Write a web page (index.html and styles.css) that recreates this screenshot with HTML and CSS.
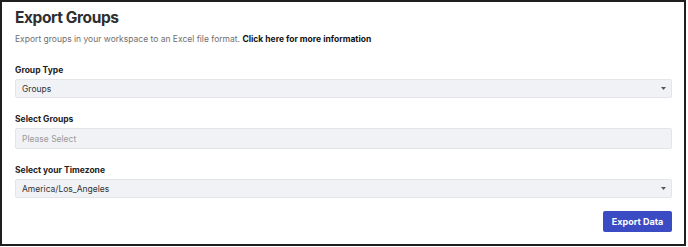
FILE: index.html
```html
<!DOCTYPE html>
<html lang="en">
<head>
<meta charset="utf-8">
<title>Export Groups</title>
<link rel="stylesheet" href="styles.css">
</head>
<body>
<div class="frame">
  <h1 class="title">Export Groups</h1>
  <p class="desc">Export groups in your workspace to an Excel file format. <a class="link" href="#">Click here for more information</a></p>

  <div class="group">
    <div class="label">Group Type</div>
    <div class="select">
      <span class="value">Groups</span>
      <svg class="caret" width="5" height="3" viewBox="0 0 5 3"><path d="M0 0H5L2.5 3Z" fill="#555"/></svg>
    </div>
  </div>

  <div class="group">
    <div class="label">Select Groups</div>
    <div class="select input">
      <span class="placeholder">Please Select</span>
    </div>
  </div>

  <div class="group">
    <div class="label">Select your Timezone</div>
    <div class="select">
      <span class="value">America/Los_Angeles</span>
      <svg class="caret" width="5" height="3" viewBox="0 0 5 3"><path d="M0 0H5L2.5 3Z" fill="#555"/></svg>
    </div>
  </div>

  <div class="actions">
    <button class="btn">Export Data</button>
  </div>
</div>
</body>
</html>
```

FILE: styles.css
```css
* { box-sizing: border-box; }
html, body { margin: 0; padding: 0; background: #ffffff; }
body { font-family: Inter, "Noto Sans", Arial, sans-serif; }

.frame {
  width: 686px;
  height: 246px;
  border: 2px solid #1f1f1f;
  padding: 6px 12px 0 13px;
  background: #fff;
}

.title {
  margin: 0;
  font-size: 15.5px;
  line-height: 20px;
  font-weight: 700;
  color: #2e2e2e;
  letter-spacing: -0.4px;
}

.desc {
  margin: 5px 0 0;
  font-size: 8.5px;
  line-height: 12px;
  color: #6f6f6f;
}
.link {
  color: #111;
  font-weight: 700;
  text-decoration: none;
}

.group { margin-top: 19px; }
.group + .group { margin-top: 15px; }

.label {
  font-size: 8.5px;
  line-height: 12px;
  font-weight: 700;
  color: #222;
}

.select {
  margin-top: 3px;
  height: 19px;
  background: #f1f2f5;
  border: 1px solid #e4e5e9;
  border-radius: 2px;
  display: flex;
  align-items: center;
  justify-content: space-between;
  padding: 0 5px 0 6px;
  font-size: 8.5px;
  color: #333;
}
.select.input { height: 21px; }
.placeholder { color: #9a9a9a; }
.caret { display: block; }

.actions {
  display: flex;
  justify-content: flex-end;
  margin-top: 13px;
}
.btn {
  width: 69px;
  height: 21px;
  border: none;
  border-radius: 2px;
  background: #3a4bc3;
  color: #fff;
  font-family: Inter, "Noto Sans", Arial, sans-serif;
  font-size: 9px;
  font-weight: 700;
  padding: 0;
}
```
